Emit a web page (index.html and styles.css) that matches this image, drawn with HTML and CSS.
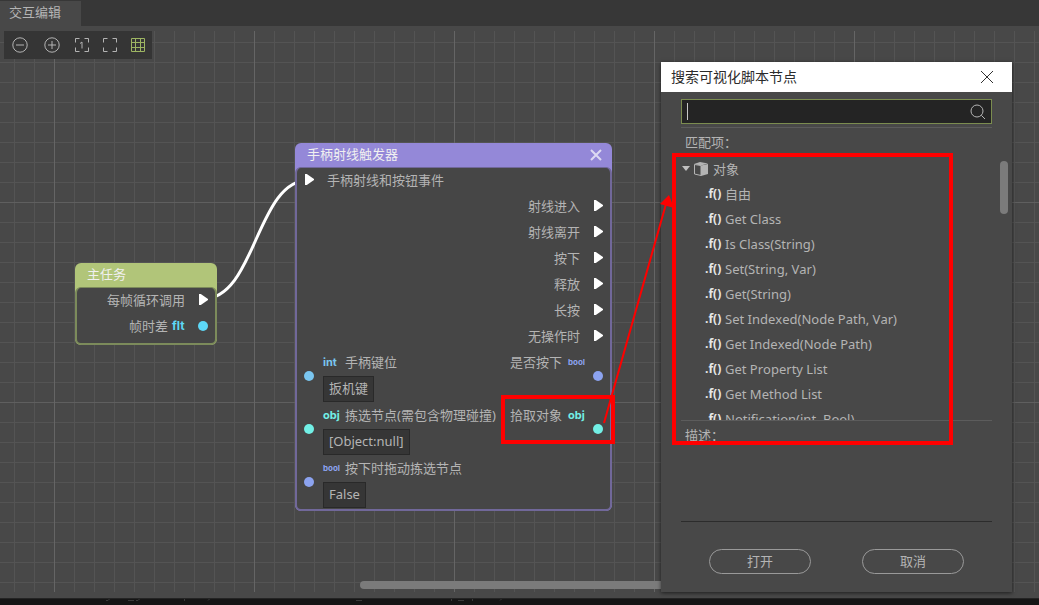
FILE: index.html
```html
<!DOCTYPE html>
<html lang="zh-CN">
<head>
<meta charset="utf-8">
<title>交互编辑</title>
<link rel="stylesheet" href="styles.css">
</head>
<body>
<nav class="tabs"><button class="tab">交互编辑</button></nav>
<main class="editor">
  <div class="stage">
    <div class="toolbar">
      <button class="tool wide" aria-label="缩小"><svg width="16" height="16" viewBox="0 0 16 16"><circle cx="8" cy="8" r="7.2"/><path d="M4 8h8"/></svg></button>
      <button class="tool wide" aria-label="放大"><svg width="16" height="16" viewBox="0 0 16 16"><circle cx="8" cy="8" r="7.2"/><path d="M4 8h8M8 4v8"/></svg></button>
      <button class="tool" aria-label="原始大小"><svg width="16" height="16" viewBox="0 0 16 16"><path d="M1.500 5.500v-4h4M10.500 1.500h4v4M14.500 10.500v4h-4M5.500 14.500h-4v-4M6 6.500l2-1.500v6.500"/></svg></button>
      <button class="tool" aria-label="适应窗口"><svg width="16" height="16" viewBox="0 0 16 16"><path d="M1.500 5.500v-4h4M10.500 1.500h4v4M14.500 10.500v4h-4M5.500 14.500h-4v-4"/></svg></button>
      <button class="tool active" aria-label="网格"><svg width="16" height="16" viewBox="0 0 16 16"><path d="M1.500 1.500h13v13h-13zM1.500 5.500h13M1.500 10.500h13M5.500 1.500v13M10.500 1.500v13"/></svg></button>
    </div>

    <svg class="overlay" aria-hidden="true"><path class="wire" d="M203 268C256 268 256 149 309 149"/></svg>

    <section class="node main-task">
      <header class="node-head">主任务</header>
      <div class="node-body">
        <div class="row out"><span>每帧循环调用</span><i class="exec"></i></div>
        <div class="row out"><span>帧时差</span><b class="type flt">flt</b><i class="port flt"></i></div>
      </div>
    </section>

    <section class="node trigger">
      <header class="node-head"><span>手柄射线触发器</span><button class="node-close" aria-label="关闭"><svg width="12" height="12" viewBox="0 0 12 12"><path d="M1 1l10 10M11 1L1 11"/></svg></button></header>
      <div class="node-body">
        <div class="row in"><i class="exec"></i><span>手柄射线和按钮事件</span></div>
        <div class="row out"><span>射线进入</span><i class="exec"></i></div>
        <div class="row out"><span>射线离开</span><i class="exec"></i></div>
        <div class="row out"><span>按下</span><i class="exec"></i></div>
        <div class="row out"><span>释放</span><i class="exec"></i></div>
        <div class="row out"><span>长按</span><i class="exec"></i></div>
        <div class="row out"><span>无操作时</span><i class="exec"></i></div>
        <div class="group">
          <i class="port int"></i>
          <div class="field"><div class="label"><b class="type int">int</b><span>手柄键位</span></div><button class="value">扳机键</button></div>
          <div class="label result"><span>是否按下</span><b class="type bool">bool</b></div>
          <i class="port bool"></i>
        </div>
        <div class="group">
          <i class="port obj"></i>
          <div class="field"><div class="label"><b class="type obj">obj</b><span>拣选节点(需包含物理碰撞)</span></div><button class="value">[Object:null]</button></div>
          <div class="label result"><span>拾取对象</span><b class="type obj">obj</b></div>
          <i class="port obj"></i>
        </div>
        <div class="group">
          <i class="port bool"></i>
          <div class="field"><div class="label"><b class="type bool">bool</b><span>按下时拖动拣选节点</span></div><button class="value">False</button></div>
        </div>
      </div>
    </section>

    <div class="hscroll"></div>

    <section class="dialog" role="dialog" aria-labelledby="dialog-title">
      <header class="dialog-head"><span id="dialog-title">搜索可视化脚本节点</span><button class="dialog-close" aria-label="关闭"><svg width="14" height="14" viewBox="0 0 14 14"><path d="M1 1l12 12M13 1L1 13"/></svg></button></header>
      <div class="dialog-body">
        <div class="search"><i class="caret"></i><input type="text" id="query" aria-label="搜索"><svg width="18" height="18" viewBox="0 0 18 18"><circle cx="8" cy="8" r="6"/><path d="M12.300 12.300L16 16"/></svg></div>
        <h2 class="caption matches">匹配项：</h2>
        <div class="results">
          <ul class="tree">
            <li class="item parent"><i class="arrow"></i><svg width="14" height="14" viewBox="0 0 14 14"><path class="cube-side" d="M.500 2.500V12L7 13.500V3.500z"/><path class="cube-top" d="M0 2L6 0L14 1.500L7 3.500z"/><path class="cube-front" d="M7 3.500L14 2V12L7 14z"/></svg><span>对象</span></li>
            <li class="item"><b class="fn">.f()</b><span>自由</span></li>
            <li class="item"><b class="fn">.f()</b><span>Get Class</span></li>
            <li class="item"><b class="fn">.f()</b><span>Is Class(String)</span></li>
            <li class="item"><b class="fn">.f()</b><span>Set(String, Var)</span></li>
            <li class="item"><b class="fn">.f()</b><span>Get(String)</span></li>
            <li class="item"><b class="fn">.f()</b><span>Set Indexed(Node Path, Var)</span></li>
            <li class="item"><b class="fn">.f()</b><span>Get Indexed(Node Path)</span></li>
            <li class="item"><b class="fn">.f()</b><span>Get Property List</span></li>
            <li class="item"><b class="fn">.f()</b><span>Get Method List</span></li>
            <li class="item"><b class="fn">.f()</b><span>Notification(int, Bool)</span></li>
          </ul>
          <i class="vscroll"></i>
        </div>
        <h2 class="caption describe">描述：</h2>
        <div class="actions"><button class="pill">打开</button><button class="pill">取消</button></div>
      </div>
    </section>

    <svg class="overlay" aria-hidden="true">
      <rect class="mark" x="503" y="366" width="110" height="45"/>
      <rect class="mark" x="674" y="124" width="277" height="288"/>
      <path class="pointer" d="M604 392L666 173"/>
      <path class="pointer-head" d="M669 164L660 173L674 177z"/>
    </svg>
  </div>
</main>
<footer class="output"><svg width="520" height="4" viewBox="0 0 520 4" aria-hidden="true"><path d="M106 1.500h2l2-2M128 1.500h6M136 1.500h2l2-2M184.500 0v2M208 1.500l2-2M356 1.500h6M451.500 0v2M458 1.500h6M472.500 0v2M500 1.500l2-2"/></svg></footer>
</body>
</html>
```

FILE: styles.css
```css
* { box-sizing: border-box; }
body {
  margin: 0;
  height: 100vh;
  display: flex;
  flex-direction: column;
  overflow: hidden;
  background: #484848;
  color: #b4b4b4;
  font: 13px/18px "Noto Sans", "Noto Sans CJK SC", sans-serif;
  font-kerning: none;
}
button, input { font: inherit; color: inherit; border: 0; padding: 0; background: none; }
svg { fill: none; flex: none; }
ul { list-style: none; margin: 0; padding: 0; }

.tabs { display: flex; height: 26px; padding-top: 1px; background: #373737; }
.tab { padding: 0 20px 3px 9px; background: #484848; }

.editor { flex: 1; display: flex; padding: 5px 0 6px; }
.stage {
  flex: 1;
  position: relative;
  background:
    linear-gradient(90deg, #656565 1px, transparent 1px) 54px 0 / 200px 200px,
    linear-gradient(#5f5f5f 1px, transparent 1px) 0 171px / 200px 200px,
    linear-gradient(90deg, #545454 1px, transparent 1px) 14px 0 / 20px 20px,
    linear-gradient(#545454 1px, transparent 1px) 0 11px / 20px 20px;
}
.overlay { position: absolute; left: 0; top: 0; width: 100%; height: 100%; pointer-events: none; }
.wire { stroke: #fff; stroke-width: 3; }
.mark { stroke: #f00; stroke-width: 4; }
.pointer { stroke: #f00; stroke-width: 2; }
.pointer-head { fill: #f00; }

.toolbar { position: absolute; left: 4px; top: 0; display: flex; height: 28px; background: #353535; }
.tool { width: 28px; display: flex; align-items: center; justify-content: center; }
.tool.wide { width: 32px; }
.tool svg { stroke: #b4b4b4; }
.tool.active svg { stroke: #9db562; }

.node { position: absolute; border-radius: 6px; }
.main-task { left: 75px; top: 232px; width: 142px; background: #b1c579; }
.trigger { left: 295px; top: 112px; width: 317px; background: #9488d8; }
.node-head { display: flex; justify-content: space-between; height: 24px; padding: 0 10px 0 12px; line-height: 23px; color: #f0f0f0; }
.node-close { display: flex; align-items: center; }
.node-close svg { stroke: #ddd9f2; stroke-width: 2; }
.node-body { border: 2px solid; border-top-width: 1px; border-radius: 6px; background: #464646; }
.main-task .node-body { border-color: #7c8b5b; padding-bottom: 3px; }
.trigger .node-body { border-color: #71689a; }
.row { display: flex; align-items: center; height: 26px; padding-bottom: 3px; }
.row.in { padding-left: 8px; gap: 13px; }
.row.out { justify-content: flex-end; padding-right: 7px; }
.row.out .exec { margin-left: 14px; }
.row.out .port { margin-left: 8px; }
.row.out .type { width: 18px; margin-left: 4px; font-size: 12px; }
.exec { width: 9px; height: 11px; background: #fff; clip-path: polygon(0 0, 20% 0, 100% 45%, 100% 55%, 20% 100%, 0 100%); }
.port { width: 10px; height: 10px; border-radius: 50%; flex: none; background: currentColor; }
.type { font: bold 11px/12px "Inter", "Noto Sans", sans-serif; }
.flt { color: #5dd8f7; }
.int { color: #7ac6f0; }
.obj { color: #72f0e6; }
.bool { color: #8ca3f0; }
.type.bool { font-size: 8px; }
.group { display: flex; align-items: center; height: 53px; padding: 0 7px 2px; gap: 9px; }
.field { display: flex; flex-direction: column; align-items: flex-start; flex: 1; white-space: nowrap; }
.label { display: flex; align-items: center; height: 26px; padding-bottom: 2px; }
.field .type { width: 22px; }
.value { height: 26px; padding: 0 5px 1px; border: 1px solid #292929; background: #363636; }
.result { align-self: flex-start; gap: 6px; }
.result .type { width: 16px; }

.hscroll { position: absolute; left: 360px; right: 40px; bottom: 3px; height: 8px; border-radius: 4px; background: #7b7b7b; }

.dialog { position: absolute; left: 661px; top: 31px; width: 351px; bottom: 0; display: flex; flex-direction: column; background: #484848; box-shadow: 0 1px 4px rgba(0, 0, 0, .6); }
.dialog-head { display: flex; align-items: center; justify-content: space-between; height: 30px; padding: 0 18px 0 10px; background: #fff; color: #2b2b2b; font-size: 14px; }
.dialog-close { display: flex; }
.dialog-close svg { stroke: #333; }
.dialog-body { flex: 1; display: flex; flex-direction: column; padding: 7px 20px 18px; }
.search { display: flex; align-items: center; height: 25px; padding: 0 4px 0 5px; border: 1px solid #7b8c4f; background: #242424; }
.search input { flex: 1; min-width: 0; outline: 0; }
.search svg { stroke: #b4b4b4; }
.caret { width: 1px; height: 17px; background: #c8c8c8; }
.caption { margin: 0; padding-left: 4px; font-size: 13px; font-weight: normal; line-height: 29px; }
.matches { margin-top: 3px; border-top: 1px solid #5c5c5c; }
.results { display: flex; justify-content: space-between; height: 263px; overflow: hidden; margin-right: -16px; }
.item { display: flex; align-items: center; height: 25px; padding: 0 0 2px 24px; white-space: nowrap; }
.item.parent { padding-left: 1px; gap: 5px; }
.arrow { width: 8px; height: 5px; margin-right: -1px; background: #c0c0c0; clip-path: polygon(0 0, 100% 0, 50% 100%); }
.cube-side { stroke: #b4b4b4; }
.cube-top, .cube-front { fill: #b4b4b4; }
.fn { width: 20px; color: #e6e6e6; font: bold 12px/16px "Open Sans", "Noto Sans", sans-serif; }
.vscroll { width: 8px; height: 53px; margin-top: 4px; border-radius: 4px; background: #7b7b7b; }
.describe { flex: 1; border-top: 1px solid #5c5c5c; border-bottom: 1px solid #2c2c2c; }
.actions { display: flex; justify-content: center; gap: 51px; padding-top: 27px; }
.pill { width: 102px; height: 25px; padding-bottom: 2px; border: 1px solid #999; border-radius: 13px; }

.output { height: 7px; border-top: 1px solid #242424; background: #151515; overflow: hidden; }
.output svg { display: block; stroke: #3a3a3a; }
```
